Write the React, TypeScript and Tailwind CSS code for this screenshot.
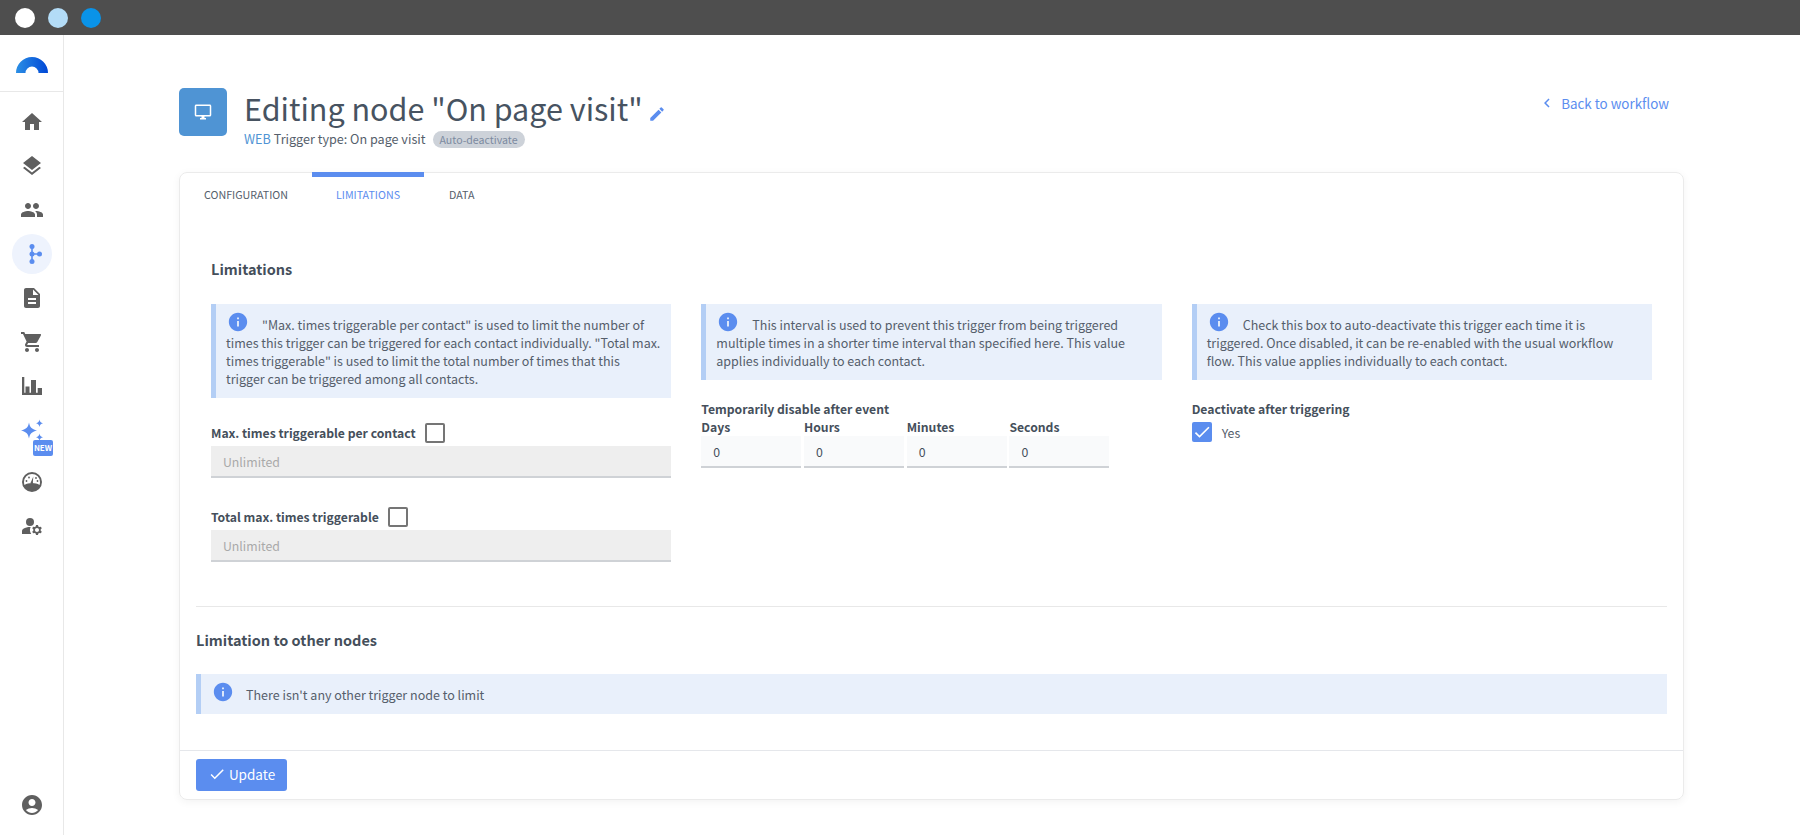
import { MdHome, MdLayers, MdPeople, MdDescription, MdShoppingCart, MdManageAccounts, MdAccountCircle, MdOutlineDesktopWindows, MdEdit, MdInfo, MdChevronLeft, MdCheck } from 'react-icons/md';

const FlowIcon = () => (
  <svg width="24" height="24" viewBox="0 0 24 24" fill="#5b8def">
    <circle cx="12" cy="4.500" r="2.500" />
    <circle cx="12" cy="12" r="2.500" />
    <circle cx="12" cy="19.500" r="2.500" />
    <circle cx="19.500" cy="12" r="2.500" />
    <path d="M11.200 4.500h1.600v15h-1.600zM12 11.200h7.500v1.600H12z" />
  </svg>
);

const BarsIcon = () => (
  <svg width="24" height="24" viewBox="0 0 24 24" fill="#5f5f5f">
    <path d="M2 3h2.300v15.700H22V21H2zM5.500 12.500h4v6.500h-4zM11 6h5v13h-5zM17.700 14H22v5h-4.300z" />
  </svg>
);

const GaugeIcon = () => (
  <svg width="24" height="24" viewBox="0 0 24 24" fill="#5f5f5f">
    <path d="M12 2a10 10 0 1 0 0 20 10 10 0 0 0 0-20zm0 2a8 8 0 0 1 8 8c0 1-.2 2-.5 2.900C17.500 13.700 14.800 13 12 13s-5.500.7-7.500 1.900A8 8 0 0 1 4 12a8 8 0 0 1 8-8z" />
    <path d="M5.500 16.200C7.300 15 9.600 14.500 12 14.500s4.700.5 6.500 1.700A8 8 0 0 1 12 20a8 8 0 0 1-6.500-3.800z" />
    <path d="M13.300 6.500l-.4 5.400a1.200 1.200 0 1 1-1.700-.5z" />
    <circle cx="6.500" cy="11" r=".9" />
    <circle cx="9" cy="7.500" r=".9" />
    <circle cx="17.500" cy="11" r=".9" />
    <circle cx="16" cy="8" r=".9" />
  </svg>
);

const SparkIcon = () => (
  <svg width="32" height="32" viewBox="0 0 32 32" fill="#5b8def">
    <path d="M13 7.500c.8 4.500 2.500 6.700 8 8-5.500 1.300-7.200 3.500-8 8-.8-4.500-2.500-6.700-8-8 5.500-1.300 7.200-3.500 8-8z" />
    <path d="M23.500 4.500c.4 2.300 1.300 3.200 3.500 3.700-2.200.5-3.100 1.400-3.500 3.700-.4-2.300-1.300-3.200-3.500-3.700 2.200-.5 3.100-1.400 3.500-3.700z" />
    <path d="M23.500 18.500c.4 2.300 1.300 3.200 3.500 3.700-2.200.5-3.100 1.400-3.500 3.700-.4-2.300-1.300-3.200-3.500-3.700 2.200-.5 3.100-1.400 3.500-3.700z" />
  </svg>
);

const Logo = () => (
  <svg width="32" height="16" viewBox="0 0 32 16">
    <defs>
      <linearGradient id="logoGrad" x1="0" x2="1" y1="0" y2="0">
        <stop offset="0" stopColor="#2b8fe5" />
        <stop offset="1" stopColor="#0047d6" />
      </linearGradient>
    </defs>
    <path d="M0 16a16 16 0 0 1 32 0H22.500a6.500 6.500 0 0 0-13 0z" fill="url(#logoGrad)" />
  </svg>
);

const navIcons = [
  <MdHome size={24} />,
  <MdLayers size={24} />,
  <MdPeople size={24} />,
];

const navIconsAfter = [
  <MdDescription size={24} />,
  <MdShoppingCart size={24} />,
  <BarsIcon />,
];

const Sidebar = () => (
  <aside className="w-[64px] shrink-0 border-r border-[#e8e8e8] flex flex-col items-stretch text-[#5f5f5f]">
    <div className="h-[57px] border-b border-[#e8e8e8] flex items-center justify-center pt-[4px]">
      <Logo />
    </div>
    <nav className="flex flex-col items-center pt-[8px]">
      {navIcons.map((icon, i) => (
        <div key={i} className="h-[44px] flex items-center justify-center">{icon}</div>
      ))}
      <div className="w-[40px] h-[40px] my-[2px] rounded-full bg-[#eef3fd] flex items-center justify-center">
        <FlowIcon />
      </div>
      {navIconsAfter.map((icon, i) => (
        <div key={i} className="h-[44px] flex items-center justify-center">{icon}</div>
      ))}
      <div className="relative h-[52px] w-full flex items-start justify-center pt-[7px]">
        <SparkIcon />
        <span className="absolute left-[33px] top-[32px] w-[20px] h-[16px] rounded-[2px] bg-[#5b8def] text-white text-[8px] leading-[16px] font-bold text-center">NEW</span>
      </div>
      <div className="h-[44px] flex items-center justify-center"><GaugeIcon /></div>
      <div className="h-[44px] flex items-center justify-center"><MdManageAccounts size={24} /></div>
    </nav>
    <div className="mt-auto h-[60px] flex items-center justify-center"><MdAccountCircle size={24} /></div>
  </aside>
);

const InfoBox = ({ children, className = '' }: { children: React.ReactNode; className?: string }) => (
  <div className={`bg-[#e9f0fb] border-l-[5px] border-[#b3cef5] pl-[10px] pr-[10px] pt-[12px] pb-[10px] text-[12.500px] leading-[18px] text-[#555e6b] ${className}`}>
    <MdInfo size={22} className="inline-block text-[#5b8def] ml-[1px] mr-[13px] align-[-3px] -mt-[6px]" />
    {children}
  </div>
);

const CheckBox = ({ checked = false }: { checked?: boolean }) =>
  checked ? (
    <span className="w-[20px] h-[20px] rounded-[2px] bg-[#5b8def] flex items-center justify-center">
      <MdCheck size={20} className="text-white" />
    </span>
  ) : (
    <span className="w-[20px] h-[20px] rounded-[2px] border-2 border-[#757575] bg-white" />
  );

const LockedField = ({ label }: { label: string }) => (
  <div>
    <div className="flex items-center gap-[9px] h-[25px] pb-[1px] text-[12.200px] font-semibold text-[#454f5b]">
      {label}
      <CheckBox />
    </div>
    <div className="h-[32px] bg-[#eeeeee] border-b-2 border-[#cfd2d6] pl-[12px] text-[12.300px] leading-[32px] text-[#a9a9a9]">Unlimited</div>
  </div>
);

const DelayField = ({ label }: { label: string }) => (
  <div className="w-[100px]">
    <div className="h-[18px] text-[12.200px] leading-[18px] font-semibold text-[#454f5b]">{label}</div>
    <div className="h-[32px] bg-[#f9fafb] border-b-2 border-[#cfd2d6] pl-[12px] text-[12.300px] leading-[32px] text-[#454f5b]">0</div>
  </div>
);

const App = () => {
  return (
    <div className="h-screen flex flex-col overflow-hidden bg-white font-['Noto_Sans_CJK_SC','Noto_Sans',sans-serif] text-[#454f5b]">
      <div className="h-[35px] shrink-0 bg-[#4e4e4e] flex items-center gap-[13px] pl-[15px]">
        <span className="w-[20px] h-[20px] rounded-full bg-white" />
        <span className="w-[20px] h-[20px] rounded-full bg-[#b3dcf7]" />
        <span className="w-[20px] h-[20px] rounded-full bg-[#0a93e8]" />
      </div>
      <div className="flex-1 flex min-h-0">
        <Sidebar />
        <main className="flex-1 pl-[115px] pt-[53px]">
          <header className="flex items-start justify-between h-[84px] w-[1505px] pr-[15px]">
            <div className="flex gap-[17px]">
              <div className="w-[48px] h-[48px] rounded-[5px] bg-[#4f94d4] flex items-center justify-center">
                <MdOutlineDesktopWindows size={18} className="text-white" />
              </div>
              <div>
                <h1 className="flex items-center gap-[5px] h-[40px] text-[30.500px] leading-[40px] font-normal text-[#475361]">
                  Editing node "On page visit"
                  <MdEdit size={18} className="text-[#5b8def] mt-[12px]" />
                </h1>
                <div className="flex items-center gap-[3px] h-[20px] mt-[1px] text-[12.600px] leading-[20px] text-[#555e6b]">
                  <span className="text-[#4f94d4]">WEB</span>
                  <span>Trigger type: On page visit</span>
                  <span className="ml-[4px] h-[17px] px-[7px] rounded-full bg-[#cdd2d9] text-[10.600px] leading-[17px] text-[#7c8aa0]">Auto-deactivate</span>
                </div>
              </div>
            </div>
            <a className="flex items-center gap-[5px] mt-[5px] text-[13.400px] leading-[20px] text-[#5b8def]">
              <MdChevronLeft size={18} />
              Back to workflow
            </a>
          </header>
          <section className="h-[628px] w-[1505px] border border-[#ebebeb] rounded-[8px] shadow-[0_2px_8px_rgba(0,0,0,0.05)] flex flex-col">
            <div className="flex h-[46px] text-[10.700px] uppercase">
              <div className="w-[132px] pl-[24px] pt-[13px] leading-[18px] text-[#555e6b]">Configuration</div>
              <div className="w-[112px] text-center leading-[18px] text-[#5b8def] border-t-[5px] border-[#5b8def] rounded-b-[4px] pt-[9px] h-[27px] -mt-[1px]">Limitations</div>
              <div className="pl-[25px] pt-[13px] leading-[18px] text-[#555e6b]">Data</div>
            </div>
            <div className="flex-1 px-[16px]">
              <h2 className="pl-[15px] pt-[38px] h-[85px] text-[14.500px] leading-[24px] font-bold text-[#454f5b]">Limitations</h2>
              <div className="grid grid-cols-3 gap-x-[30px] pl-[15px] pr-[15px]">
                <div>
                  <InfoBox>"Max. times triggerable per contact" is used to limit the number of times this trigger can be triggered for each contact individually. "Total max. times triggerable" is used to limit the total number of times that this<br />trigger can be triggered among all contacts.</InfoBox>
                  <div className="mt-[23px] flex flex-col gap-[27px]">
                    <LockedField label="Max. times triggerable per contact" />
                    <LockedField label="Total max. times triggerable" />
                  </div>
                </div>
                <div>
                  <InfoBox>This interval is used to prevent this trigger from being triggered multiple times in a shorter time interval than specified here. This value applies individually to each contact.</InfoBox>
                  <div className="mt-[20px] h-[18px] text-[12.200px] leading-[18px] font-semibold text-[#454f5b]">Temporarily disable after event</div>
                  <div className="flex gap-[2.700px]">
                    <DelayField label="Days" />
                    <DelayField label="Hours" />
                    <DelayField label="Minutes" />
                    <DelayField label="Seconds" />
                  </div>
                </div>
                <div>
                  <InfoBox>Check this box to auto-deactivate this trigger each time it is triggered. Once disabled, it can be re-enabled with the usual workflow flow. This value applies individually to each contact.</InfoBox>
                  <div className="mt-[20px] h-[18px] text-[12.200px] leading-[18px] font-semibold text-[#454f5b]">Deactivate after triggering</div>
                  <div className="mt-[4px] flex items-center gap-[10px] text-[12.300px] text-[#555e6b]">
                    <CheckBox checked />
                    <span className="mt-[2px]">Yes</span>
                  </div>
                </div>
              </div>
              <hr className="mt-[44px] border-[#e8e8e8]" />
              <h2 className="pt-[21px] h-[67px] text-[14.500px] leading-[24px] font-bold text-[#454f5b]">Limitation to other nodes</h2>
              <InfoBox className="flex items-center h-[40px] !pt-[1px] !pb-0">
                <span className="-ml-[1px] mt-[1px]">There isn't any other trigger node to limit</span>
              </InfoBox>
            </div>
            <footer className="h-[49px] border-t border-[#e5e7eb] px-[16px] pt-[8px]">
              <button className="flex items-center justify-center gap-[3px] w-[91px] h-[32px] pb-[2px] rounded-[3px] bg-[#5b8def] text-white text-[13.500px]">
                <MdCheck size={18} />
                Update
              </button>
            </footer>
          </section>
        </main>
      </div>
    </div>
  );
};

export default App;
